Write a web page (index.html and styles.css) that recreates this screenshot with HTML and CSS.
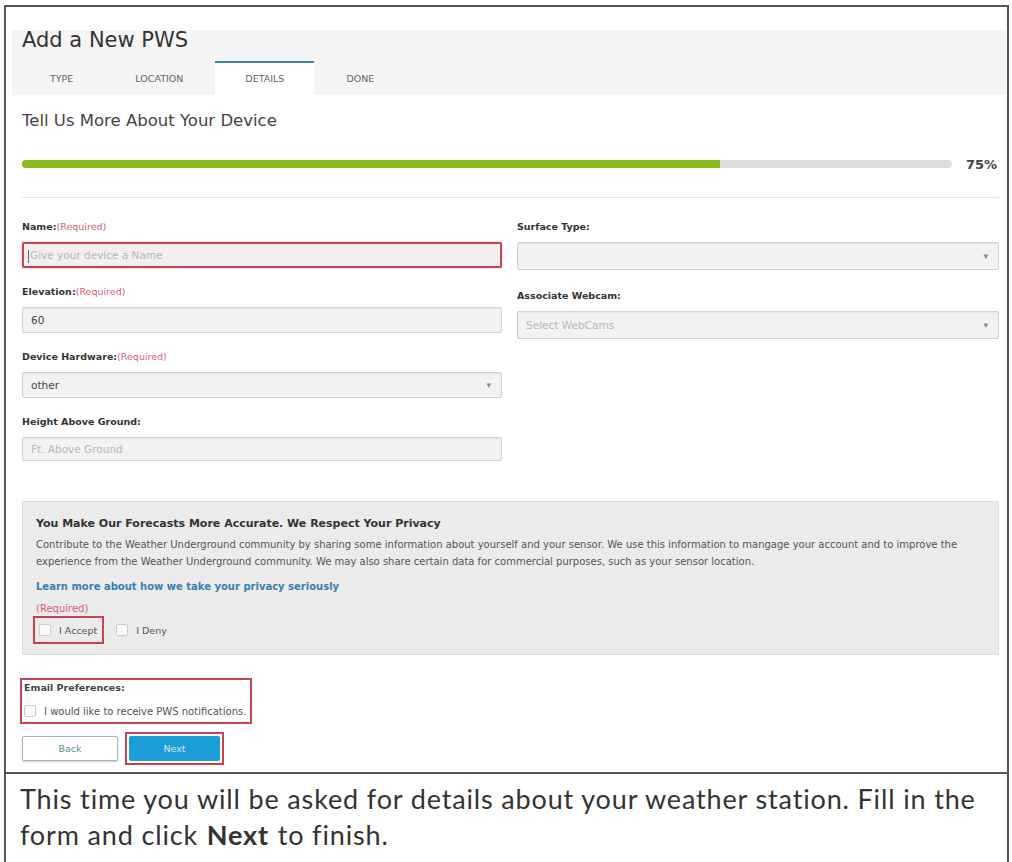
FILE: index.html
```html
<!DOCTYPE html>
<html lang="en">

<head>
    <meta charset="UTF-8">
    <title>Add a New PWS</title>
    <link rel="stylesheet" href="styles.css">
</head>

<body>
    <div class="frame">
        <div class="shot">
            <div class="header">
                <h1>Add a New PWS</h1>
                <ul class="tabs">
                    <li>Type</li>
                    <li>Location</li>
                    <li class="active">Details</li>
                    <li>Done</li>
                </ul>
            </div>

            <div class="page">
                <h2>Tell Us More About Your Device</h2>
                <div class="progress">
                    <div class="bar">
                        <div class="fill" style="width: 75%"></div>
                    </div>
                    <span class="pct">75%</span>
                </div>

                <div class="form">
                    <div class="col">
                        <div class="field">
                            <label>Name:<em>(Required)</em></label>
                            <div class="input marked"><span class="caret-line"></span><span class="ph">Give your device a Name</span></div>
                        </div>
                        <div class="field">
                            <label>Elevation:<em>(Required)</em></label>
                            <div class="input">60</div>
                        </div>
                        <div class="field">
                            <label>Device Hardware:<em>(Required)</em></label>
                            <div class="input select">other</div>
                        </div>
                        <div class="field">
                            <label>Height Above Ground:</label>
                            <div class="input short"><span class="ph">Ft. Above Ground</span></div>
                        </div>
                    </div>
                    <div class="col right">
                        <div class="field">
                            <label>Surface Type:</label>
                            <div class="input select"></div>
                        </div>
                        <div class="field">
                            <label>Associate Webcam:</label>
                            <div class="input select"><span class="ph">Select WebCams</span></div>
                        </div>
                    </div>
                </div>

                <div class="privacy">
                    <h4>You Make Our Forecasts More Accurate. We Respect Your Privacy</h4>
                    <p>Contribute to the Weather Underground community by sharing some information about yourself and your sensor. We use this information to mangage your account and to improve the experience from the Weather Underground community. We may also share certain data for commercial purposes, such as your sensor location.</p>
                    <a href="#" class="learn">Learn more about how we take your privacy seriously</a>
                    <div class="req">(Required)</div>
                    <div class="choices">
                        <label class="choice marked"><span class="box"></span>I Accept</label>
                        <label class="choice"><span class="box"></span>I Deny</label>
                    </div>
                </div>

                <div class="email marked">
                    <div class="title">Email Preferences:</div>
                    <label class="choice"><span class="box"></span>I would like to receive PWS notifications.</label>
                </div>

                <div class="buttons">
                    <button class="back">Back</button>
                    <div class="next-wrap marked"><button class="next">Next</button></div>
                </div>
            </div>
        </div>

        <div class="caption">
            <p>This time you will be asked for details about your weather station. Fill in the form and click <b>Next</b> to finish.</p>
        </div>
    </div>
</body>
</html>
```

FILE: styles.css
```css
* {
    padding: 0;
    margin: 0;
    box-sizing: border-box;
}

body {
    font-family: "DejaVu Sans", Verdana, sans-serif;
    color: #333;
    background: #fff;
}

.frame {
    width: 1005px;
    margin: 5px 0 0 4px;
    border: 2px solid #555;
    border-bottom: none;
}

.shot {
    padding: 23px 1px 7px 6px;
}

/* header band */
.header {
    background: #f5f5f5;
    height: 65px;
    padding-left: 10px;
}

.header h1 {
    font-size: 21px;
    font-weight: normal;
    line-height: 20px;
    color: #333;
}

.tabs {
    list-style: none;
    display: flex;
    gap: 2px;
    margin-top: 11px;
    margin-left: -2px;
}

.tabs li {
    height: 34px;
    line-height: 32px;
    padding: 0 30px;
    font-size: 9.5px;
    text-transform: uppercase;
    color: #666;
    border-top: 2px solid transparent;
}

.tabs li.active {
    background: #fff;
    border-top-color: #3f86ad;
}

/* page body */
.page {
    padding: 0 7px 0 10px;
}

.page h2 {
    font-size: 16.5px;
    font-weight: normal;
    line-height: 18px;
    color: #444;
    margin-top: 17px;
}

.progress {
    display: flex;
    align-items: center;
    height: 14px;
    margin-top: 27px;
    padding-bottom: 26px;
    box-sizing: content-box;
    border-bottom: 1px solid #e6e6e6;
}

.bar {
    width: 930px;
    height: 8px;
    border-radius: 4px;
    background: #dcdcdc;
    overflow: hidden;
}

.fill {
    height: 100%;
    background: #8abb1f;
}

.pct {
    margin-left: 14px;
    font-size: 13px;
    font-weight: bold;
    color: #444;
}

.form {
    display: flex;
    gap: 15px;
    margin-top: 22px;
}

.col {
    width: 480px;
}

.col.right {
    width: 482px;
}

.field {
    margin-bottom: 17px;
}

.col.right .field {
    margin-bottom: 19px;
}

.field label {
    display: block;
    font-size: 9.5px;
    font-weight: bold;
    line-height: 14px;
    color: #333;
    margin-bottom: 8px;
}

.field label em,
.req {
    font-style: normal;
    font-weight: normal;
    color: #d9606e;
}

.input {
    position: relative;
    height: 26px;
    line-height: 24px;
    padding: 0 8px;
    font-size: 10.5px;
    color: #444;
    background: #f2f2f2;
    border: 1px solid #d2d2d2;
    border-radius: 2px;
    box-shadow: inset 0 1px 2px rgba(0, 0, 0, .06);
}

.col.right .input {
    height: 28px;
    line-height: 26px;
}

.input.short {
    height: 24px;
    line-height: 22px;
}

.input .ph {
    color: #b8b8b8;
}

.input.select::after {
    content: "\25BE";
    position: absolute;
    right: 10px;
    top: 0;
    font-size: 9px;
    color: #888;
}

.input.marked {
    border: 2px solid #c8424f;
    background: #f3efef;
    box-shadow: 0 0 2px rgba(200, 66, 79, .5);
    line-height: 22px;
    padding-left: 4px;
}

.caret-line {
    display: inline-block;
    width: 1px;
    height: 13px;
    background: #666;
    vertical-align: middle;
    margin-right: 1px;
}

/* privacy box */
.privacy {
    margin-top: 23px;
    height: 154px;
    background: #ebebeb;
    border: 1px solid #dcdcdc;
    padding: 15px 13px 0;
}

.privacy h4 {
    font-size: 11px;
    line-height: 14px;
    color: #333;
}

.privacy p {
    margin-top: 5px;
    font-size: 10px;
    line-height: 17px;
    color: #555;
    padding-right: 10px;
}

.learn {
    display: block;
    margin-top: 10px;
    font-size: 10px;
    line-height: 14px;
    font-weight: bold;
    color: #3a7fb0;
    text-decoration: none;
}

.req {
    margin-top: 8px;
    font-size: 10px;
    line-height: 14px;
}

.choices {
    display: flex;
    align-items: center;
    gap: 8px;
    margin-left: -3px;
}

.choice {
    display: flex;
    align-items: center;
    height: 20px;
    font-size: 9.5px;
    color: #555;
    white-space: nowrap;
}

.choices .choice {
    padding: 0 5px 0 4px;
    height: 28px;
}

.box {
    width: 12px;
    height: 12px;
    margin-right: 8px;
    background: #fafafa;
    border: 1px solid #cfcfcf;
    border-radius: 2px;
}

.marked {
    border: 2px solid #c8424f;
}

/* email */
.email {
    width: 232px;
    margin: 23px 0 0 -2px;
    padding: 1px 3px 1px 2px;
}

.email .title {
    font-size: 9.5px;
    font-weight: bold;
    line-height: 14px;
    color: #444;
}

.email .choice {
    margin-top: 6px;
    font-size: 10px;
}

.buttons {
    display: flex;
    align-items: flex-start;
    gap: 7px;
    margin-top: 8px;
}

.buttons button {
    font-family: inherit;
    font-size: 9.5px;
    height: 25px;
    width: 96px;
    border-radius: 2px;
}

.back {
    margin-top: 4px;
    background: #fff;
    color: #5f8d8d;
    border: 1px solid #9fb7bf;
    box-shadow: 0 1px 2px rgba(0, 0, 0, .2);
}

.next-wrap {
    padding: 2px;
}

.next {
    width: 91px !important;
    background: #1b9ed8;
    color: #cde9f6;
    border: none;
}

/* caption */
.caption {
    border-top: 2px solid #555;
    padding: 7px 10px 14px 14px;
    font-family: Lato, "Liberation Sans", sans-serif;
    font-size: 27px;
    letter-spacing: 0.85px;
    line-height: 36px;
    color: #333;
}

.caption b {
    margin: 0 1px;
}
```
